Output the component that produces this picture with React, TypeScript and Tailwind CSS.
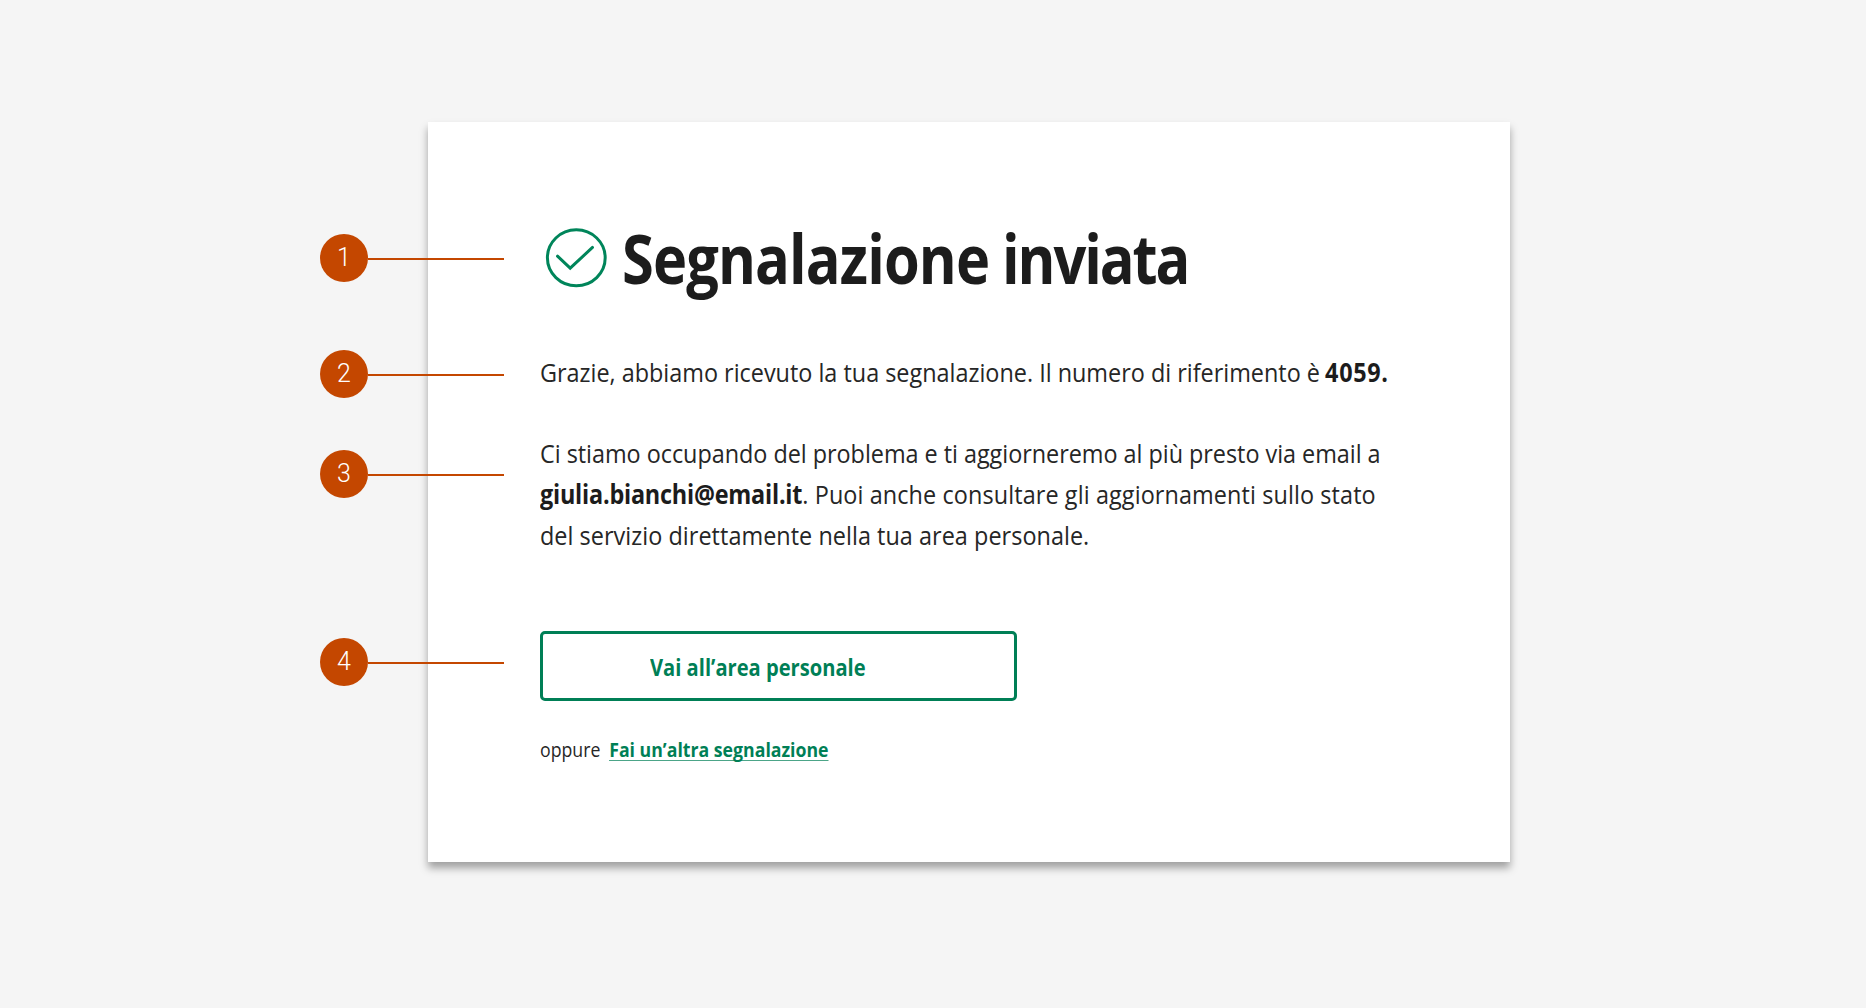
import React from 'react';

const callouts = [
  { n: 1, top: 'top-[112px]' },
  { n: 2, top: 'top-[228px]' },
  { n: 3, top: 'top-[328px]' },
  { n: 4, top: 'top-[516px]' },
];

export default function App() {
  return (
    <div className="flex h-[1008px] w-full flex-col bg-[#f5f5f5] pt-[122px] pl-[428px] font-['Open_Sans',sans-serif]">
      <main className="relative h-[740px] w-[1082px] bg-white pt-[95px] pl-28 text-[#1c1c1c] shadow-[0_6px_8px_rgba(0,0,0,0.35)]">
        <header className="flex h-20">
          <svg className="mt-[10px] ml-[5px] h-[62px] w-[63px] shrink-0" viewBox="0 0 63 62" fill="none" stroke="#00855a" strokeWidth="3">
            <ellipse cx="31.3" cy="30.8" rx="28.9" ry="28" />
            <path d="M12.5 29.2 25.2 41.2 47.5 20.4" strokeLinecap="round" />
          </svg>
          <h1 className="mt-px ml-[14px] origin-left scale-x-85 text-[68px] leading-[80px] font-bold whitespace-nowrap">
            <span className="tracking-[-1.05px]">Segnalazione</span>
            <span className="tracking-[-2.5px]"> inviata</span>
          </h1>
        </header>

        <p className="mt-[55px] w-[960px] origin-left scale-x-90 text-[26px] leading-[41px] whitespace-nowrap text-[#262626]">
          Grazie, abbiamo ricevuto la tua segnalazione. Il numero di riferimento è{' '}
          <b className="-ml-px tracking-[0.7px] text-[#1c1c1c]">4059.</b>
        </p>

        <p className="mt-10 w-[960px] origin-left scale-x-90 text-[26px] leading-[41px] whitespace-nowrap text-[#262626]">
          <span className="tracking-[-0.03px]">Ci stiamo occupando del problema e ti aggiorneremo al più presto via email a</span>
          <br />
          <b className="tracking-[-0.23px] text-[#1c1c1c]">giulia.bianchi@email.it</b>
          <span className="tracking-[0.12px]">. Puoi anche consultare gli aggiornamenti sullo stato</span>
          <br />
          <span className="tracking-[0.05px]">del servizio direttamente nella tua area personale.</span>
        </p>

        <button className="mt-[75px] flex h-[70px] w-[477px] items-center rounded-[5px] border-[3px] border-[#007f56] pl-[107px] text-[23px] font-bold text-[#007f56]">
          <span className="mt-[3px] origin-left scale-x-[0.875] whitespace-nowrap">Vai all’area personale</span>
        </button>

        <div className="mt-[35px] flex w-[400px] origin-left scale-x-[0.885] text-xl leading-7 whitespace-nowrap">
          <span className="text-[#262626]">oppure</span>
          <a className="ml-2.5 h-[25px] border-b border-[#007f56]/70 font-bold text-[#007f56]">Fai un’altra segnalazione</a>
        </div>

        {callouts.map((c) => (
          <div key={c.n} className={'absolute -left-[108px] flex w-[184px] items-center ' + c.top}>
            <span className="flex size-12 items-center justify-center rounded-full bg-[#c44700] pb-px font-['Roboto'] text-[25px] leading-none font-light text-white">{c.n}</span>
            <span className="mt-[2px] h-[2px] flex-1 bg-[#c44700]" />
          </div>
        ))}
      </main>
    </div>
  );
}
